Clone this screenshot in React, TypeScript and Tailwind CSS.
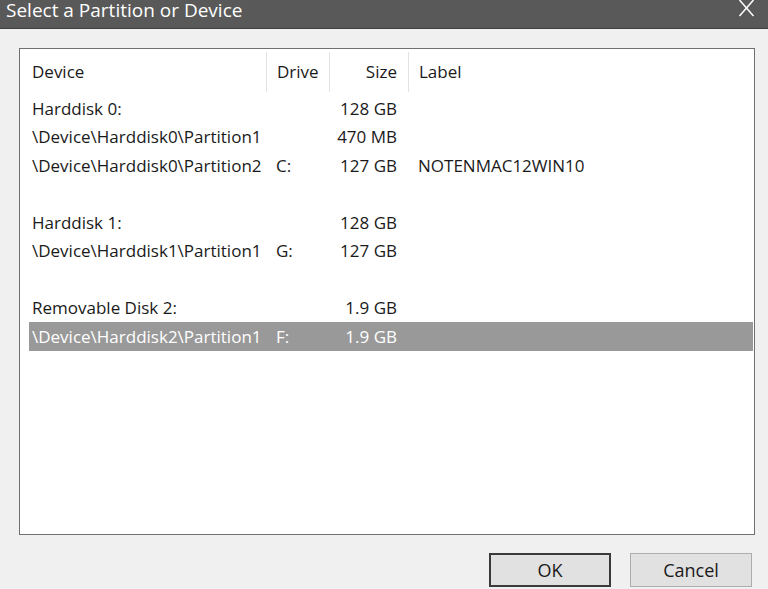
import React from 'react'

type Row = { device: string; drive?: string; size?: string; label?: string; selected?: boolean }

const rows: Row[] = [
  { device: 'Harddisk 0:', size: '128 GB' },
  { device: '\\Device\\Harddisk0\\Partition1', size: '470 MB' },
  { device: '\\Device\\Harddisk0\\Partition2', drive: 'C:', size: '127 GB', label: 'NOTENMAC12WIN10' },
  { device: '' },
  { device: 'Harddisk 1:', size: '128 GB' },
  { device: '\\Device\\Harddisk1\\Partition1', drive: 'G:', size: '127 GB' },
  { device: '' },
  { device: 'Removable Disk 2:', size: '1.9 GB' },
  { device: '\\Device\\Harddisk2\\Partition1', drive: 'F:', size: '1.9 GB', selected: true },
]

const font = { fontFamily: '"Open Sans", "Noto Sans", sans-serif' }

const App = () => {
  return (
    <div className="w-[768px] h-[589px] overflow-hidden flex flex-col bg-[#f0f0f0]" style={font}>
      {/* title bar */}
      <div className="h-[29px] shrink-0 bg-[#595959] border-b border-[#3f3f3f] flex items-start justify-between pl-[6px] pr-[13px]">
        <span className="text-white text-[19px] leading-[19px] pt-[1px]">Select a Partition or Device</span>
        <svg width="17" height="18" viewBox="0 0 17 18">
          <path d="M1.5 0 L15.5 16 M15.5 0 L1.5 16" stroke="#ffffff" strokeWidth="1.5" fill="none" />
        </svg>
      </div>

      <div className="flex-1 flex flex-col pt-[19px] pl-[19px] pr-[13px]">
        {/* list view */}
        <div className="h-[487px] border border-[#707070] bg-white pl-[9px] pr-[1px] text-[17px] text-[#1a1a1a]">
          <div className="h-[45px] grid grid-cols-[237px_63px_79px_1fr] items-center">
            <div className="pl-[3px]">Device</div>
            <div className="pl-[10px] border-l border-[#e3e3e3] h-[40px] flex items-center">Drive</div>
            <div className="pr-[11px] border-l border-[#e3e3e3] h-[40px] flex items-center justify-end">Size</div>
            <div className="pl-[10px] border-l border-[#e3e3e3] h-[40px] flex items-center">Label</div>
          </div>
          {rows.map((r, i) => (
            <div
              key={i}
              className={`h-[28.5px] grid grid-cols-[237px_63px_79px_1fr] items-center whitespace-nowrap ${
                r.selected ? 'bg-[#999999] text-white' : ''
              }`}
            >
              <div className="pl-[3px]">{r.device}</div>
              <div className="pl-[10px]">{r.drive}</div>
              <div className="pr-[11px] text-right">{r.size}</div>
              <div className="pl-[10px]">{r.label}</div>
            </div>
          ))}
        </div>

        <div className="flex justify-end gap-[19px] pt-[18px] pr-[3px]">
          <button className="w-[122px] h-[34px] bg-[#e1e1e1] border-2 border-[#3a3a3a] text-[18px] text-[#1a1a1a]">OK</button>
          <button className="w-[122px] h-[34px] bg-[#e1e1e1] border border-[#adadad] text-[18px] text-[#1a1a1a]">Cancel</button>
        </div>
      </div>
    </div>
  )
}

export default App
